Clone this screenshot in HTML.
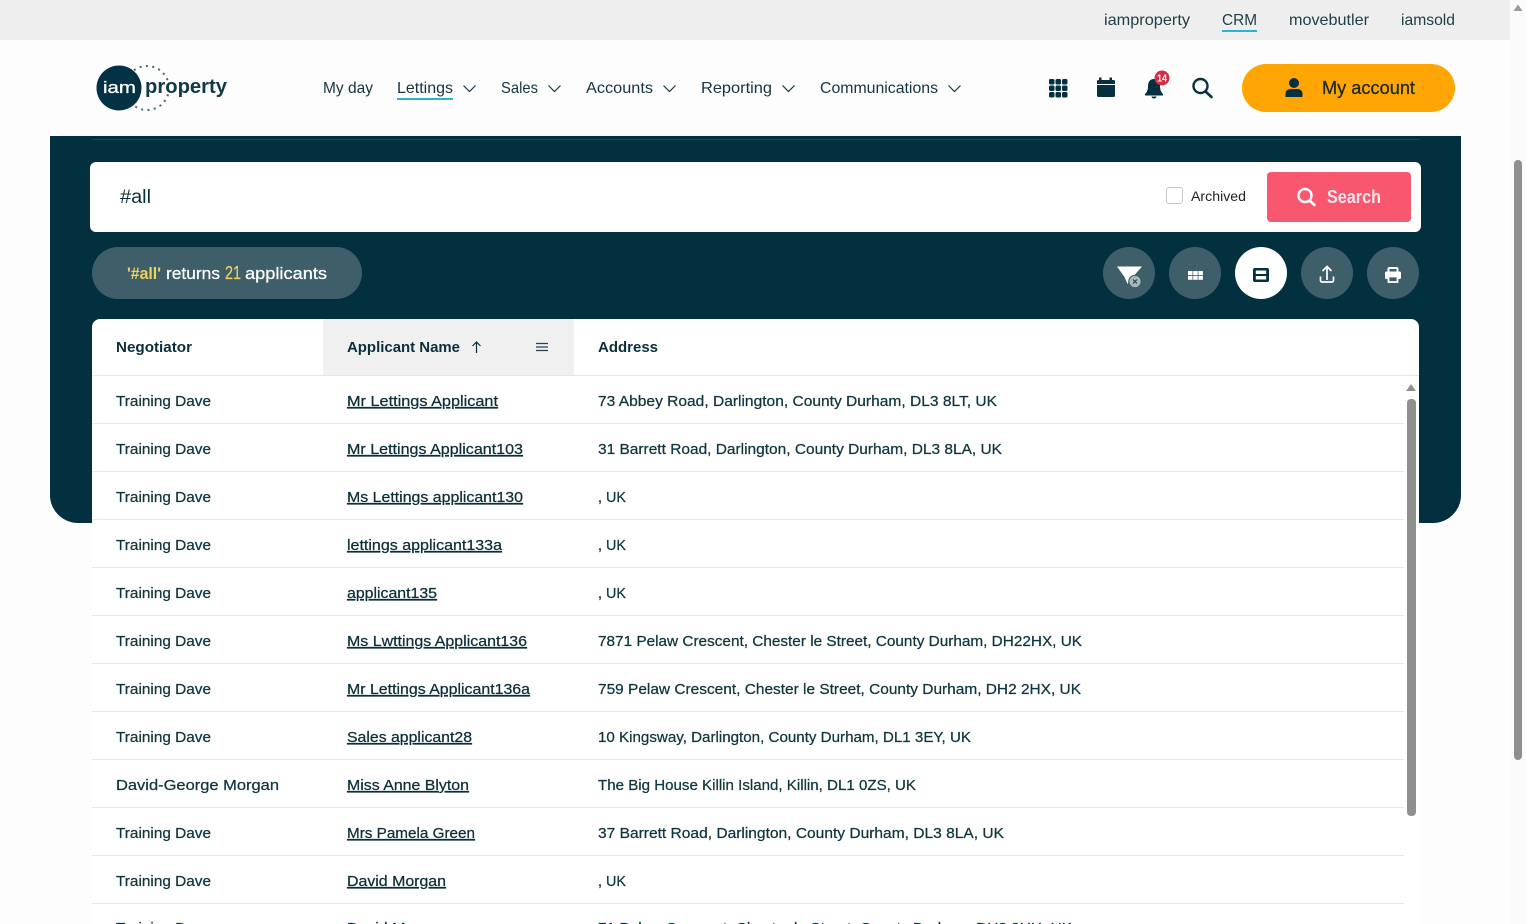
<!DOCTYPE html>
<html lang="en">
<head>
<meta charset="utf-8">
<title>iam property CRM</title>
<style>
html,body{margin:0;padding:0;width:1526px;height:924px;overflow:hidden;background:#fdfdfd}
svg{display:block;position:absolute;left:0;top:0}
text{font-family:"Liberation Sans",sans-serif;fill:#0b2f3a}
.top{font-size:16px;fill:#1d3d47}
.nav{font-size:16px;fill:#14353f}
.th{font-size:15px;font-weight:bold;fill:#0b2f3a}
.td{font-size:15px;fill:#0f3540;stroke:#0f3540;stroke-width:.25}
.a{font-size:15px;fill:#0b2f3a;stroke:#0b2f3a;stroke-width:.25;text-decoration:underline}
.chev{fill:none;stroke:#14353f;stroke-width:1.2}
.ln{stroke:#e6e6e6;stroke-width:1}
</style>
</head>
<body>
<svg width="1526" height="924" viewBox="0 0 1526 924" xmlns="http://www.w3.org/2000/svg">
<!-- page / scrollbar -->
<rect width="1526" height="924" fill="#fdfdfd"/>
<rect x="1510" width="16" height="924" fill="#fbfbfb"/>
<rect width="1510" height="40" fill="#eeeeee"/>
<path d="M1518 4.500L1522.500 11H1513.500Z" fill="#9a9a9a"/>
<rect x="1514" y="160" width="8" height="600" rx="4" fill="#8f8f8f"/>

<!-- top links -->
<text class="top" x="1104" y="25" textLength="86" lengthAdjust="spacingAndGlyphs">iamproperty</text>
<text class="top" x="1222" y="25" textLength="35" lengthAdjust="spacingAndGlyphs">CRM</text>
<rect x="1222" y="30" width="35" height="2" fill="#2bb3cf"/>
<text class="top" x="1289" y="25" textLength="80" lengthAdjust="spacingAndGlyphs">movebutler</text>
<text class="top" x="1401" y="25" textLength="54" lengthAdjust="spacingAndGlyphs">iamsold</text>

<!-- logo -->
<circle cx="147" cy="88" r="22" fill="none" stroke="#4a6670" stroke-width="2" stroke-dasharray="2 4.400"/>
<circle cx="119" cy="88" r="22.500" fill="#023243"/>
<text x="103" y="93" font-size="17" textLength="33" lengthAdjust="spacingAndGlyphs" style="fill:#fff;stroke:#fff;stroke-width:.3">iam</text>
<text x="145" y="93" font-size="20" font-weight="bold" textLength="82" lengthAdjust="spacingAndGlyphs" style="fill:#0f3a47;stroke:#fdfdfd;stroke-width:3;paint-order:stroke">property</text>

<!-- nav -->
<text class="nav" x="323" y="93" textLength="50" lengthAdjust="spacingAndGlyphs">My day</text>
<text class="nav" x="397" y="93" textLength="56" lengthAdjust="spacingAndGlyphs">Lettings</text>
<rect x="397" y="98" width="56" height="2" fill="#2bb3cf"/>
<path class="chev" d="M463.500 85.500L469.500 91.500L475.500 85.500"/>
<text class="nav" x="501" y="93" textLength="37" lengthAdjust="spacingAndGlyphs">Sales</text>
<path class="chev" d="M548.500 85.500L554.500 91.500L560.500 85.500"/>
<text class="nav" x="586" y="93" textLength="67" lengthAdjust="spacingAndGlyphs">Accounts</text>
<path class="chev" d="M663.500 85.500L669.500 91.500L675.500 85.500"/>
<text class="nav" x="701" y="93" textLength="71" lengthAdjust="spacingAndGlyphs">Reporting</text>
<path class="chev" d="M782.500 85.500L788.500 91.500L794.500 85.500"/>
<text class="nav" x="820" y="93" textLength="118" lengthAdjust="spacingAndGlyphs">Communications</text>
<path class="chev" d="M948.500 85.500L954.500 91.500L960.500 85.500"/>

<!-- header icons -->
<g fill="#04303f">
  <rect x="1049" y="79" width="5.500" height="5.500" rx="1.500"/><rect x="1055.500" y="79" width="5.500" height="5.500" rx="1.500"/><rect x="1062" y="79" width="5.500" height="5.500" rx="1.500"/>
  <rect x="1049" y="85.500" width="5.500" height="5.500" rx="1.500"/><rect x="1055.500" y="85.500" width="5.500" height="5.500" rx="1.500"/><rect x="1062" y="85.500" width="5.500" height="5.500" rx="1.500"/>
  <rect x="1049" y="92" width="5.500" height="5.500" rx="1.500"/><rect x="1055.500" y="92" width="5.500" height="5.500" rx="1.500"/><rect x="1062" y="92" width="5.500" height="5.500" rx="1.500"/>
  <path d="M1099 77.500h2.500v2.500h8v-2.500h2.500v2.500h1.500a1.500 1.500 0 0 1 1.500 1.500v2.500h-18v-2.500a1.500 1.500 0 0 1 1.500-1.500h.5zM1097 85h18v10.500a1.500 1.500 0 0 1-1.500 1.500h-15a1.500 1.500 0 0 1-1.500-1.500z"/>
  <path d="M1154 79c-4 0-6 3-6 7 0 4-1 6-3 8v1.500h18V94c-2-2-3-4-3-8 0-4-2-7-6-7z"/>
  <path d="M1151.500 96.500h5a2.500 2 0 0 1-5 0z"/>
</g>
<circle cx="1162" cy="78" r="7.500" fill="#d22f46"/>
<text x="1157" y="81.500" font-size="10" font-weight="bold" textLength="10" lengthAdjust="spacingAndGlyphs" style="fill:#fff">14</text>
<circle cx="1200.500" cy="86" r="7" fill="none" stroke="#04303f" stroke-width="2.400"/>
<path d="M1205.500 91.500L1211.500 97" stroke="#04303f" stroke-width="2.600" stroke-linecap="round"/>

<!-- account -->
<rect x="1242" y="64" width="213" height="48" rx="24" fill="#ffa504"/>
<circle cx="1294" cy="83" r="5" fill="#04303f"/>
<path d="M1285.500 97v-3c0-3 2-5 5-5h7c3 0 5 2 5 5v3z" fill="#04303f"/>
<text x="1322" y="94" font-size="18.500" textLength="93" lengthAdjust="spacingAndGlyphs" style="fill:#1f2a20;stroke:#1f2a20;stroke-width:.3">My account</text>

<!-- dark panel -->
<path d="M50 136H1461V495a28 28 0 0 1-28 28H78a28 28 0 0 1-28-28Z" fill="#02303e"/>
<rect x="92" y="139" width="1328" height="1" fill="#1b4754"/>

<!-- search -->
<rect x="90" y="162" width="1331" height="70" rx="6" fill="#fff"/>
<text x="120" y="203" font-size="19" textLength="31" lengthAdjust="spacingAndGlyphs">#all</text>
<rect x="1166.500" y="187.500" width="16" height="16" rx="2.500" fill="#fff" stroke="#c8c8c8"/>
<text x="1191" y="201" font-size="14" textLength="55" lengthAdjust="spacingAndGlyphs" style="fill:#222">Archived</text>
<rect x="1267" y="172" width="144" height="50" rx="4" fill="#f9566f"/>
<circle cx="1305" cy="195.500" r="6.500" fill="none" stroke="#fff" stroke-width="2.400"/>
<path d="M1309.500 200.500L1314.500 205" stroke="#fff" stroke-width="2.600" stroke-linecap="round"/>
<text x="1327" y="203" font-size="18" font-weight="bold" textLength="54" lengthAdjust="spacingAndGlyphs" style="fill:#fde6ea">Search</text>

<!-- result pill -->
<rect x="92" y="247" width="270" height="52" rx="26" fill="#3e5f69"/>
<text x="127" y="279" font-size="17" font-weight="bold" textLength="34" lengthAdjust="spacingAndGlyphs" style="fill:#f3cf5c">'#all'</text>
<text x="166" y="279" font-size="17" textLength="54" lengthAdjust="spacingAndGlyphs" style="fill:#fff;stroke:#fff;stroke-width:.25">returns</text>
<text x="225" y="279" font-size="18" textLength="16" lengthAdjust="spacingAndGlyphs" style="fill:#f3cf5c;stroke:#f3cf5c;stroke-width:.25">21</text>
<text x="245" y="279" font-size="17" textLength="82" lengthAdjust="spacingAndGlyphs" style="fill:#fff;stroke:#fff;stroke-width:.25">applicants</text>

<!-- round buttons -->
<circle cx="1129" cy="273" r="26" fill="#3e5f69"/>
<circle cx="1195" cy="273" r="26" fill="#3e5f69"/>
<circle cx="1261" cy="273" r="26" fill="#fff"/>
<circle cx="1327" cy="273" r="26" fill="#3e5f69"/>
<circle cx="1393" cy="273" r="26" fill="#3e5f69"/>
<!-- filter clear -->
<path d="M1117 266.500h25l-7 8-5 6-2.500 3.500-3-7z" fill="#fff"/>
<circle cx="1135" cy="281.500" r="6.200" fill="#a8b9be" stroke="#3e5f69" stroke-width="1.200"/>
<path d="M1133 279.500l4 4M1137 279.500l-4 4" stroke="#23444f" stroke-width="1.200"/>
<!-- grid -->
<g fill="#fff">
  <rect x="1188" y="271" width="4.500" height="4"/><rect x="1193.200" y="271" width="4.500" height="4"/><rect x="1198.400" y="271" width="4.500" height="4"/>
  <rect x="1188" y="275.800" width="4.500" height="4"/><rect x="1193.200" y="275.800" width="4.500" height="4"/><rect x="1198.400" y="275.800" width="4.500" height="4"/>
</g>
<!-- density -->
<rect x="1253" y="268" width="16" height="14" rx="2" fill="#04303f"/>
<rect x="1255.800" y="270.500" width="10.400" height="3.500" fill="#fff"/>
<rect x="1255.800" y="276" width="10.400" height="3.500" fill="#fff"/>
<!-- export -->
<path d="M1327 280v-13M1322.500 271l4.500-4.500 4.500 4.500" fill="none" stroke="#fff" stroke-width="1.700"/>
<path d="M1320.500 276.500v4a1.500 1.500 0 0 0 1.500 1.500h10a1.500 1.500 0 0 0 1.500-1.500v-4" fill="none" stroke="#fff" stroke-width="1.700"/>
<!-- print -->
<path d="M1388.500 272v-3a1 1 0 0 1 1-1h7a1 1 0 0 1 1 1v3" fill="none" stroke="#fff" stroke-width="2"/>
<rect x="1385" y="271.500" width="16" height="7.500" rx="1.500" fill="#fff"/>
<rect x="1388.500" y="276.500" width="9" height="5.500" fill="#3e5f69" stroke="#fff" stroke-width="1.800"/>

<!-- table -->
<path d="M92 327a8 8 0 0 1 8-8H1411a8 8 0 0 1 8 8V924H92Z" fill="#fff"/>
<rect x="323" y="319" width="251" height="56" fill="#f0f0f0"/>
<line class="ln" x1="92" x2="1419" y1="375.500" y2="375.500"/>
<text class="th" x="116" y="352" textLength="76" lengthAdjust="spacingAndGlyphs">Negotiator</text>
<text class="th" x="347" y="352" textLength="113" lengthAdjust="spacingAndGlyphs">Applicant Name</text>
<path d="M476.500 353v-11M472.500 346l4-4 4 4" fill="none" stroke="#0b2f3a" stroke-width="1.200"/>
<path d="M536 343.500h12M536 347h12M536 350.500h12" stroke="#23444f" stroke-width="1.200"/>
<text class="th" x="598" y="352" textLength="60" lengthAdjust="spacingAndGlyphs">Address</text>

<path d="M1411 384L1416 391H1406Z" fill="#8f8f8f"/>
<rect x="1407" y="399" width="9" height="417" rx="4" fill="#8f8f8f"/>

<g>
<line class="ln" x1="92" x2="1404" y1="423.500" y2="423.500"/>
<line class="ln" x1="92" x2="1404" y1="471.500" y2="471.500"/>
<line class="ln" x1="92" x2="1404" y1="519.500" y2="519.500"/>
<line class="ln" x1="92" x2="1404" y1="567.500" y2="567.500"/>
<line class="ln" x1="92" x2="1404" y1="615.500" y2="615.500"/>
<line class="ln" x1="92" x2="1404" y1="663.500" y2="663.500"/>
<line class="ln" x1="92" x2="1404" y1="711.500" y2="711.500"/>
<line class="ln" x1="92" x2="1404" y1="759.500" y2="759.500"/>
<line class="ln" x1="92" x2="1404" y1="807.500" y2="807.500"/>
<line class="ln" x1="92" x2="1404" y1="855.500" y2="855.500"/>
<line class="ln" x1="92" x2="1404" y1="903.500" y2="903.500"/>
</g>

<text class="td" x="116" y="406" textLength="95" lengthAdjust="spacingAndGlyphs">Training Dave</text>
<text class="a" x="347" y="406" textLength="151" lengthAdjust="spacingAndGlyphs">Mr Lettings Applicant</text>
<text class="td" x="598" y="406" textLength="399" lengthAdjust="spacingAndGlyphs">73 Abbey Road, Darlington, County Durham, DL3 8LT, UK</text>

<text class="td" x="116" y="454" textLength="95" lengthAdjust="spacingAndGlyphs">Training Dave</text>
<text class="a" x="347" y="454" textLength="176" lengthAdjust="spacingAndGlyphs">Mr Lettings Applicant103</text>
<text class="td" x="598" y="454" textLength="404" lengthAdjust="spacingAndGlyphs">31 Barrett Road, Darlington, County Durham, DL3 8LA, UK</text>

<text class="td" x="116" y="502" textLength="95" lengthAdjust="spacingAndGlyphs">Training Dave</text>
<text class="a" x="347" y="502" textLength="176" lengthAdjust="spacingAndGlyphs">Ms Lettings applicant130</text>
<text class="td" x="598" y="502" textLength="28" lengthAdjust="spacingAndGlyphs">, UK</text>

<text class="td" x="116" y="550" textLength="95" lengthAdjust="spacingAndGlyphs">Training Dave</text>
<text class="a" x="347" y="550" textLength="155" lengthAdjust="spacingAndGlyphs">lettings applicant133a</text>
<text class="td" x="598" y="550" textLength="28" lengthAdjust="spacingAndGlyphs">, UK</text>

<text class="td" x="116" y="598" textLength="95" lengthAdjust="spacingAndGlyphs">Training Dave</text>
<text class="a" x="347" y="598" textLength="90" lengthAdjust="spacingAndGlyphs">applicant135</text>
<text class="td" x="598" y="598" textLength="28" lengthAdjust="spacingAndGlyphs">, UK</text>

<text class="td" x="116" y="646" textLength="95" lengthAdjust="spacingAndGlyphs">Training Dave</text>
<text class="a" x="347" y="646" textLength="180" lengthAdjust="spacingAndGlyphs">Ms Lwttings Applicant136</text>
<text class="td" x="598" y="646" textLength="484" lengthAdjust="spacingAndGlyphs">7871 Pelaw Crescent, Chester le Street, County Durham, DH22HX, UK</text>

<text class="td" x="116" y="694" textLength="95" lengthAdjust="spacingAndGlyphs">Training Dave</text>
<text class="a" x="347" y="694" textLength="183" lengthAdjust="spacingAndGlyphs">Mr Lettings Applicant136a</text>
<text class="td" x="598" y="694" textLength="483" lengthAdjust="spacingAndGlyphs">759 Pelaw Crescent, Chester le Street, County Durham, DH2 2HX, UK</text>

<text class="td" x="116" y="742" textLength="95" lengthAdjust="spacingAndGlyphs">Training Dave</text>
<text class="a" x="347" y="742" textLength="125" lengthAdjust="spacingAndGlyphs">Sales applicant28</text>
<text class="td" x="598" y="742" textLength="373" lengthAdjust="spacingAndGlyphs">10 Kingsway, Darlington, County Durham, DL1 3EY, UK</text>

<text class="td" x="116" y="790" textLength="163" lengthAdjust="spacingAndGlyphs">David-George Morgan</text>
<text class="a" x="347" y="790" textLength="122" lengthAdjust="spacingAndGlyphs">Miss Anne Blyton</text>
<text class="td" x="598" y="790" textLength="318" lengthAdjust="spacingAndGlyphs">The Big House Killin Island, Killin, DL1 0ZS, UK</text>

<text class="td" x="116" y="838" textLength="95" lengthAdjust="spacingAndGlyphs">Training Dave</text>
<text class="a" x="347" y="838" textLength="128" lengthAdjust="spacingAndGlyphs">Mrs Pamela Green</text>
<text class="td" x="598" y="838" textLength="406" lengthAdjust="spacingAndGlyphs">37 Barrett Road, Darlington, County Durham, DL3 8LA, UK</text>

<text class="td" x="116" y="886" textLength="95" lengthAdjust="spacingAndGlyphs">Training Dave</text>
<text class="a" x="347" y="886" textLength="99" lengthAdjust="spacingAndGlyphs">David Morgan</text>
<text class="td" x="598" y="886" textLength="28" lengthAdjust="spacingAndGlyphs">, UK</text>

<text class="td" x="116" y="933" textLength="95" lengthAdjust="spacingAndGlyphs">Training Dave</text>
<text class="a" x="347" y="933" textLength="99" lengthAdjust="spacingAndGlyphs">David Morgan</text>
<text class="td" x="598" y="933" textLength="474" lengthAdjust="spacingAndGlyphs">71 Pelaw Crescent, Chester le Street, County Durham, DH3 3HH, UK</text>
</svg>
</body>
</html>
